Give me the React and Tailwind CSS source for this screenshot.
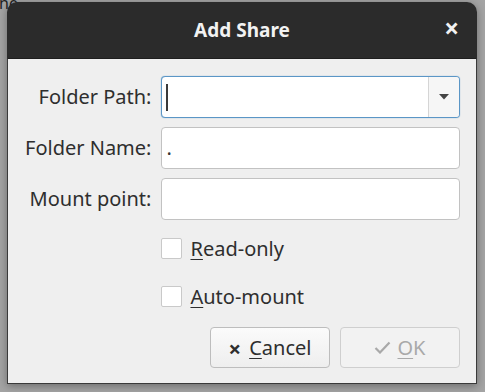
import React from "react";

const font = { fontFamily: '"Noto Sans", "Open Sans", sans-serif' };

function Field({ label, children }) {
  return (
    <>
      <div className="flex items-center justify-end text-[20px] text-[#2e2e2e] h-[42px]">{label}</div>
      {children}
    </>
  );
}

function Check({ u, rest }) {
  return (
    <div className="flex items-center gap-[8px] h-[21px]">
      <div className="w-[21px] h-[21px] bg-white border border-[#c9c9c9] rounded-[2px] shrink-0" />
      <span className="text-[20px] text-[#2e2e2e] leading-none"><span className="underline underline-offset-[3px] decoration-1">{u}</span>{rest}</span>
    </div>
  );
}

export default function App() {
  return (
    <div className="relative w-[485px] h-[392px] bg-[#a4a4a4] overflow-hidden" style={font}>
      <div className="absolute left-[-1px] top-[-7px] text-[16px] leading-[20px] text-[#222]">ne</div>
      <div className="absolute left-[7px] top-[2px] w-[470px] h-[382px] flex flex-col rounded-t-[10px] shadow-[0_2px_8px_rgba(0,0,0,0.35)]">
        <div className="h-[56px] bg-[#2b2b2b] rounded-t-[10px] flex items-center justify-center relative shrink-0">
          <span className="text-[#f2f2f2] font-bold text-[19px]">Add Share</span>
          <span className="absolute right-[18px] top-[13px] text-[#f2f2f2] font-bold text-[26px] leading-none">×</span>
        </div>
        <div className="flex-1 bg-[#efefef] border-x border-b border-t border-[#3a3a3a] border-t-[#1e1e1e] flex flex-col pl-[17px] pr-[16px] pt-[17px]">
          <div className="grid grid-cols-[auto_1fr] gap-x-[10px] gap-y-[9px]">
            <Field label="Folder Path:">
              <div className="h-[42px] bg-white border-[1.5px] border-[#5b96c6] rounded-[4px] flex shadow-[0_0_1px_#5b96c6]">
                <div className="flex-1 flex items-center pl-[4px]">
                  <div className="w-[2px] h-[27px] bg-[#3a3a3a]" />
                </div>
                <div className="w-[31px] border-l border-[#d5d5d5] bg-[#f6f6f6] rounded-r-[3px] flex items-center justify-center">
                  <svg width="10" height="6" viewBox="0 0 10 6"><path d="M0 0h10L5 5.5z" fill="#444" /></svg>
                </div>
              </div>
            </Field>
            <Field label="Folder Name:">
              <div className="h-[42px] bg-white border border-[#c2c2c2] rounded-[4px] flex items-center pl-[4px] text-[20px] text-[#333]">.</div>
            </Field>
            <Field label="Mount point:">
              <div className="h-[42px] bg-white border border-[#c2c2c2] rounded-[4px]" />
            </Field>
            <div />
            <div className="flex flex-col gap-[27px] pt-[9px]">
              <Check u="R" rest="ead-only" />
              <Check u="A" rest="uto-mount" />
            </div>
          </div>
          <div className="flex justify-end gap-[10px] mt-[20px]">
            <button className="w-[120px] h-[41px] rounded-[4px] border border-[#bdbdbd] bg-gradient-to-b from-[#fbfbfb] to-[#eeeeee] flex items-center justify-center gap-[8px] text-[20px] text-[#2e2e2e]">
              <span className="text-[22px] font-bold leading-none">×</span>
              <span className="leading-none"><span className="underline underline-offset-[3px] decoration-1">C</span>ancel</span>
            </button>
            <button className="w-[120px] h-[41px] rounded-[4px] border border-[#cfcfcf] bg-[#f2f2f2] flex items-center justify-center gap-[6px] text-[20px] text-[#a9a9a9]">
              <svg width="17" height="13" viewBox="0 0 17 13"><path d="M1.5 7l4.5 4.5L15.5 1.5" fill="none" stroke="#a9a9a9" strokeWidth="2.2" /></svg>
              <span className="leading-none"><span className="underline underline-offset-[3px] decoration-1">O</span>K</span>
            </button>
          </div>
        </div>
      </div>
    </div>
  );
}
